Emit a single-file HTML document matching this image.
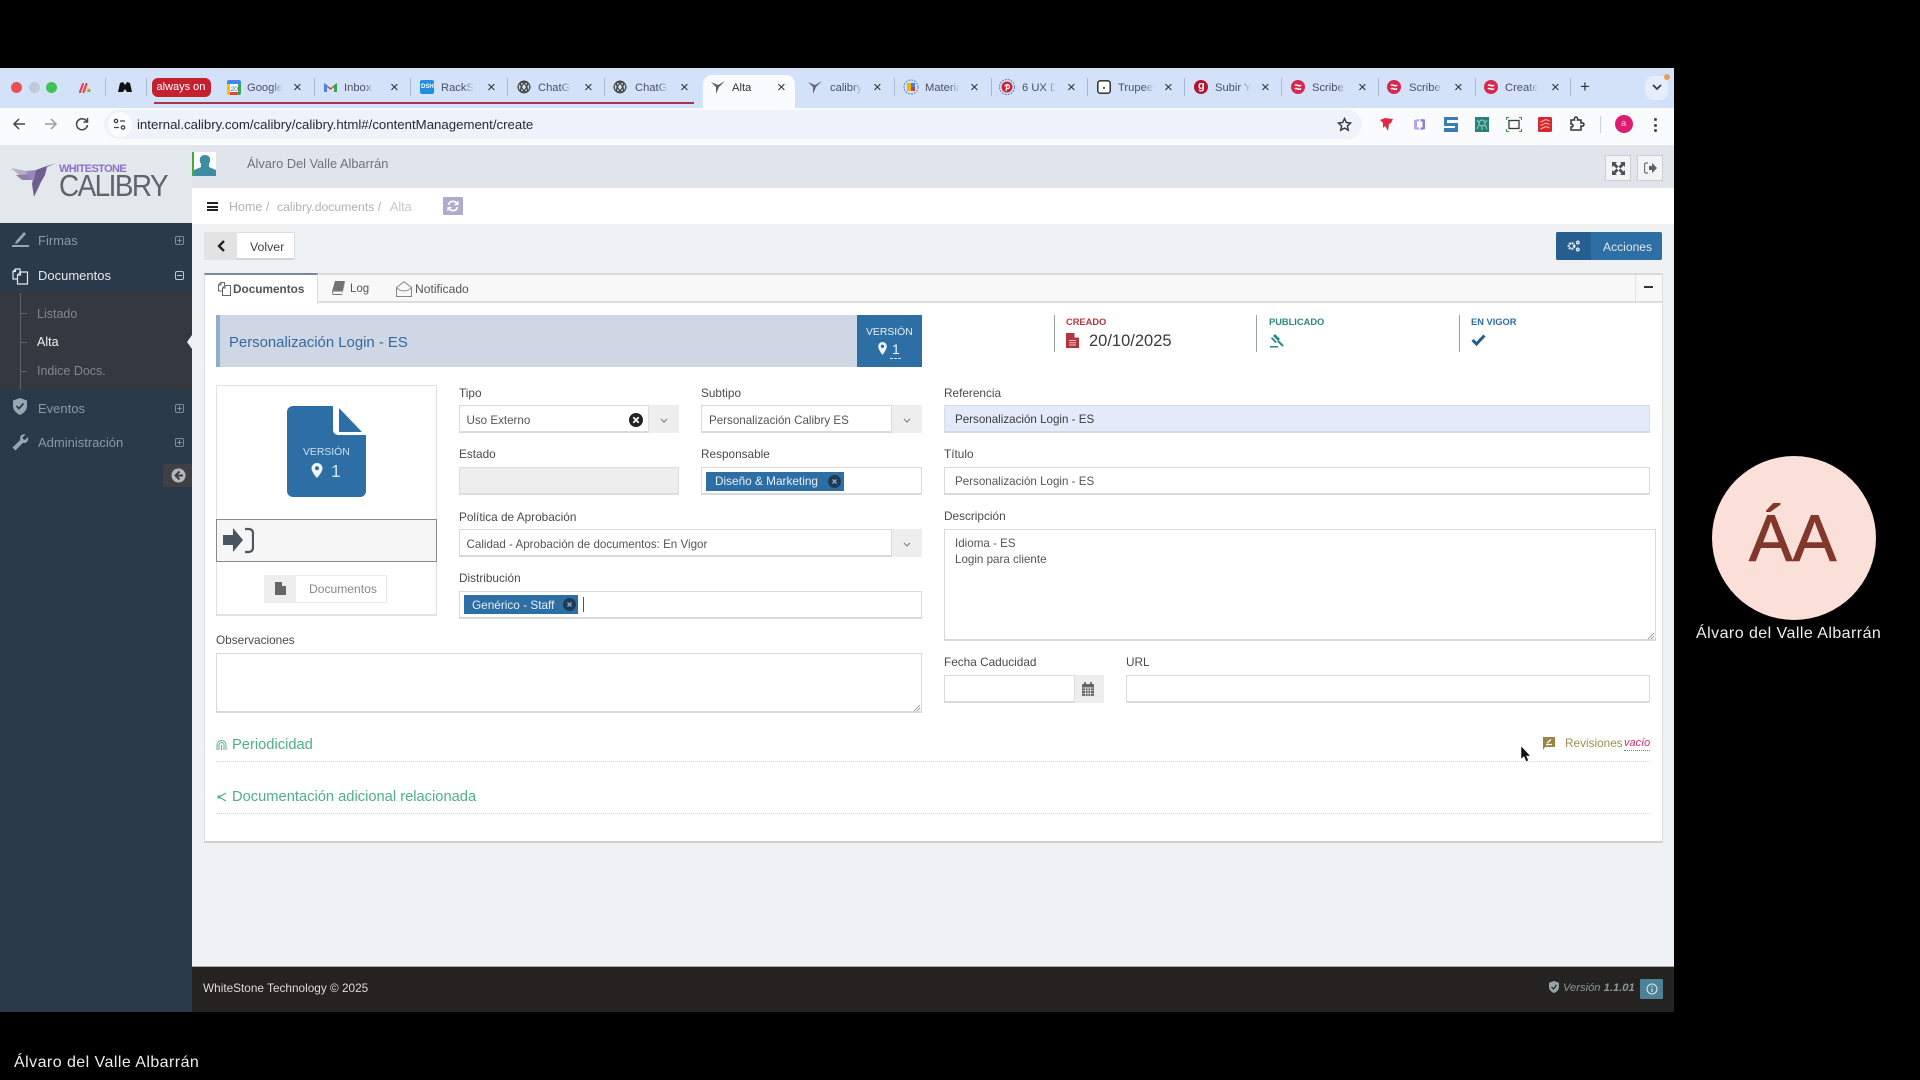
<!DOCTYPE html>
<html lang="es"><head><meta charset="utf-8"><title>Alta</title>
<style>
html,body{margin:0;padding:0;background:#000}
body{width:1920px;height:1080px;overflow:hidden;position:relative;font-family:"Liberation Sans",sans-serif;color:#444;filter:blur(.3px)}
div,svg,span.a{position:absolute;box-sizing:border-box}
.t{position:absolute;white-space:nowrap;line-height:20px;margin-top:-9px}
.tab{font-size:11.2px;color:#4a5060;overflow:hidden;-webkit-mask-image:linear-gradient(90deg,#000 70%,transparent 100%);mask-image:linear-gradient(90deg,#000 70%,transparent 100%)}
.x{font-size:15px;color:#333}
.sep{width:1px;height:18px;top:78px;background:#a9b8d2}
.lb{font-size:11.8px;color:#4a4a4a}
.in{background:#fff;border:1px solid #d9d9d9;border-bottom:2px solid #d9d9d9}
.v{font-size:11.6px;color:#555}
.arr{background:#eeeeee;border-left:1px solid #ddd}
.side{font-size:13px;color:#8b98a6}
.sub{font-size:12.5px;color:#83868b}
.tag{background:#2d6ea4;color:#e8f0f8;font-size:11.8px}
</style></head><body>

<!-- Browser chrome -->
<div style="left:0;top:68px;width:1674px;height:40px;background:#d3e2f8"></div>
<div style="left:0;top:108px;width:1674px;height:37px;background:#fafbfd"></div>
<div style="left:104px;top:110px;width:1258px;height:29px;background:#eef2fa;border-radius:15px"></div>

<div style="left:10.5px;top:81.5px;width:11px;height:11px;border-radius:50%;background:#ec4f52"></div>
<div style="left:28.5px;top:81.5px;width:11px;height:11px;border-radius:50%;background:#c0cadb"></div>
<div style="left:45.5px;top:81.5px;width:11px;height:11px;border-radius:50%;background:#3fc454"></div>

<svg style="left:79px;top:81px" width="12" height="12"><path d="M1 11 4 3M4.500 11 7.500 3" stroke="#e8434f" stroke-width="2.200" stroke-linecap="round"/><circle cx="10" cy="9.500" r="1.500" fill="#3fae5a"/><path d="M8 11 9.500 7" stroke="#f6b73c" stroke-width="1.800"/></svg>
<div class="sep" style="left:105px"></div>
<svg style="left:117px;top:81px" width="16" height="12"><path d="M1 11 3 2 6 1 8 4 10 1 13 2 15 11 10 11 8 8 6 11Z" fill="#111"/></svg>
<div class="sep" style="left:146px"></div>
<div style="left:152px;top:78px;width:59px;height:19px;background:#c4202f;border-radius:6px"></div>
<span class="t" style="left:156.500px;top:86px;font-size:11px;color:#fff">always on</span>

<!-- red group line -->
<div style="left:154px;top:102px;width:540px;height:2px;background:#a8354c"></div>

<svg style="left:227px;top:80px" width="14" height="15"><rect width="14" height="15" rx="2" fill="#fff"/><path d="M0 2a2 2 0 0 1 2-2h10a2 2 0 0 1 2 2v2H0Z" fill="#4285f4"/><path d="M0 4h3v11H2a2 2 0 0 1-2-2Z" fill="#fbbc04"/><path d="M11 4h3v9a2 2 0 0 1-2 2h-1Z" fill="#34a853"/><rect x="3" y="12" width="8" height="3" fill="#ea4335"/><text x="3.6" y="11" font-size="6.5" fill="#1967d2">20</text></svg>
<div class="t tab" style="left:247px;top:87px;width:36px">Google</div><span class="t x" style="left:293px;top:87px">×</span>
<div class="sep" style="left:314px"></div>
<svg style="left:324px;top:82px" width="13" height="10"><path d="M0 10V1l6.5 5L13 1v9h-3V5L6.5 8 3 5v5Z" fill="#ea4335"/><path d="M0 10V1l3 2v7Z" fill="#4285f4"/><path d="M13 10V1l-3 2v7Z" fill="#34a853"/></svg>
<div class="t tab" style="left:344px;top:87px;width:30px">Inbox (</div><span class="t x" style="left:390px;top:87px">×</span>
<div class="sep" style="left:410px"></div>
<div style="left:420px;top:80px;width:14px;height:14px;background:#1f8fe0;border-radius:2px"></div>
<span class="t" style="left:421px;top:86px;font-size:6px;color:#fff;font-weight:bold">DSH</span>
<div class="t tab" style="left:441px;top:87px;width:33px">RackSt</div><span class="t x" style="left:487px;top:87px">×</span>
<div class="sep" style="left:507px"></div>
<svg style="left:517px;top:80px" width="14" height="14" fill="none" stroke="#444" stroke-width="1.3"><circle cx="7" cy="7" r="5.8"/><ellipse cx="7" cy="7" rx="5.5" ry="2.4" transform="rotate(60 7 7)"/><ellipse cx="7" cy="7" rx="5.5" ry="2.4" transform="rotate(-60 7 7)"/></svg>
<div class="t tab" style="left:538px;top:87px;width:33px">ChatGPT</div><span class="t x" style="left:584px;top:87px">×</span>
<div class="sep" style="left:604px"></div>
<svg style="left:613px;top:80px" width="14" height="14" fill="none" stroke="#444" stroke-width="1.3"><circle cx="7" cy="7" r="5.8"/><ellipse cx="7" cy="7" rx="5.5" ry="2.4" transform="rotate(60 7 7)"/><ellipse cx="7" cy="7" rx="5.5" ry="2.4" transform="rotate(-60 7 7)"/></svg>
<div class="t tab" style="left:635px;top:87px;width:33px">ChatGPT</div><span class="t x" style="left:680px;top:87px">×</span>

<!-- active tab -->
<div style="left:703px;top:75px;width:92px;height:34px;background:#fafbfd;border-radius:9px 9px 0 0"></div>
<svg style="left:711px;top:81px" width="15" height="13"><path d="M0 1 7 4 14 0 8 6 5 13 5 6Z" fill="#5b5f6a"/></svg>
<span class="t" style="left:732px;top:87px;font-size:11.200px;color:#333">Alta</span><span class="t x" style="left:777px;top:87px">×</span>

<svg style="left:808px;top:81px" width="15" height="13"><path d="M0 1 7 4 14 0 8 6 5 13 5 6Z" fill="#6b6480"/></svg>
<div class="t tab" style="left:830px;top:87px;width:32px">calibry</div><span class="t x" style="left:873px;top:87px">×</span>
<div class="sep" style="left:894px"></div>
<svg style="left:903px;top:79px" width="16" height="16"><circle cx="8" cy="8" r="7" fill="none" stroke="#5f83c9" stroke-dasharray="2 1"/><rect x="4" y="4" width="4" height="8" fill="#f4b400"/><rect x="8" y="4" width="4" height="4" fill="#3b82f6"/><rect x="8" y="8" width="4" height="4" fill="#c2453b"/></svg>
<div class="t tab" style="left:925px;top:87px;width:35px">Materia</div><span class="t x" style="left:970px;top:87px">×</span>
<div class="sep" style="left:991px"></div>
<svg style="left:999px;top:79px" width="16" height="16"><circle cx="8" cy="8" r="7.5" fill="none" stroke="#5f83c9" stroke-dasharray="2 1"/><circle cx="8" cy="8" r="5.5" fill="#d0213a"/><path d="M7 12 8 6M6 7.500C6 5 10.500 5 10.500 7.500 10.500 10 8 10 7.500 9" stroke="#fff" stroke-width="1.200" fill="none"/></svg>
<div class="t tab" style="left:1022px;top:87px;width:34px">6 UX D</div><span class="t x" style="left:1067px;top:87px">×</span>
<div class="sep" style="left:1087px"></div>
<svg style="left:1097px;top:80px" width="14" height="14"><rect x=".8" y=".8" width="12.400" height="12.400" rx="2.500" fill="#fff" stroke="#222" stroke-width="1.400"/><circle cx="7" cy="8" r="1" fill="#222"/></svg>
<div class="t tab" style="left:1118px;top:87px;width:36px">Trupeer</div><span class="t x" style="left:1164px;top:87px">×</span>
<div class="sep" style="left:1184px"></div>
<div style="left:1194px;top:80px;width:14px;height:14px;border-radius:50%;background:#b5122f"></div>
<span class="t" style="left:1198px;top:85px;font-size:11px;color:#fff;font-weight:bold">g</span>
<div class="t tab" style="left:1215px;top:87px;width:36px">Subir Y</div><span class="t x" style="left:1261px;top:87px">×</span>
<div class="sep" style="left:1281px"></div>
<svg style="left:1291px;top:80px" width="14" height="14"><circle cx="7" cy="7" r="7" fill="#d6294f"/><path d="M4 5.500C6 3.500 8 7.500 10 5M4 9C6 7 8 11 10 8.500" stroke="#fff" stroke-width="1.500" fill="none"/></svg>
<div class="t tab" style="left:1312px;top:87px;width:34px">Scribe</div><span class="t x" style="left:1358px;top:87px">×</span>
<div class="sep" style="left:1378px"></div>
<svg style="left:1387px;top:80px" width="14" height="14"><circle cx="7" cy="7" r="7" fill="#d6294f"/><path d="M4 5.500C6 3.500 8 7.500 10 5M4 9C6 7 8 11 10 8.500" stroke="#fff" stroke-width="1.500" fill="none"/></svg>
<div class="t tab" style="left:1409px;top:87px;width:34px">Scribe</div><span class="t x" style="left:1454px;top:87px">×</span>
<div class="sep" style="left:1475px"></div>
<svg style="left:1484px;top:80px" width="14" height="14"><circle cx="7" cy="7" r="7" fill="#d6294f"/><path d="M4 5.500C6 3.500 8 7.500 10 5M4 9C6 7 8 11 10 8.500" stroke="#fff" stroke-width="1.500" fill="none"/></svg>
<div class="t tab" style="left:1505px;top:87px;width:33px">Create</div><span class="t x" style="left:1551px;top:87px">×</span>
<div class="sep" style="left:1570px"></div>
<span class="t" style="left:1580px;top:86px;font-size:17px;color:#333">+</span>
<div style="left:1645px;top:76px;width:23px;height:24px;background:#e6eefb;border-radius:8px"></div>
<svg style="left:1652px;top:84px" width="10" height="7"><path d="M1 1 5 5 9 1" stroke="#333" stroke-width="1.600" fill="none"/></svg>
<div style="left:1664px;top:74px;width:6px;height:6px;border-radius:50%;background:#ed9b54"></div>

<!-- toolbar icons -->
<svg style="left:12px;top:117px" width="15" height="14" fill="none" stroke="#444" stroke-width="1.500"><path d="M13 7H2M7 2 2 7l5 5"/></svg>
<svg style="left:43px;top:117px" width="15" height="14" fill="none" stroke="#9a9ea6" stroke-width="1.500"><path d="M2 7H13M8 2l5 5-5 5"/></svg>
<svg style="left:75px;top:117px" width="14" height="14" fill="none" stroke="#444" stroke-width="1.500"><path d="M11.800 4.500A5.500 5.500 0 1 0 12.500 8"/><path d="M12.500 1v4h-4" /></svg>
<div style="left:108px;top:112px;width:24px;height:25px;border-radius:50%;background:#fbfcfe"></div>
<svg style="left:113px;top:118px" width="13" height="13" fill="none" stroke="#444" stroke-width="1.300"><circle cx="3" cy="3" r="1.700"/><path d="M7 3h5M1 9.500h5"/><circle cx="10" cy="9.500" r="1.700"/></svg>
<span class="t" style="left:137px;top:124px;font-size:13.230px;color:#262a30">internal.calibry.com/calibry/calibry.html#/contentManagement/create</span>
<svg style="left:1337px;top:117px" width="15" height="15" fill="none" stroke="#333" stroke-width="1.400"><path d="M7.500 1.500 9.300 5.500 13.700 6 10.400 8.900 11.300 13.200 7.500 11 3.700 13.200 4.600 8.900 1.300 6 5.700 5.500Z"/></svg>
<svg style="left:1379px;top:117px" width="15" height="15"><path d="M1 3 6 1 14 2 12 6 10 7 9 14 6 9 4 11 4 6Z" fill="#df2b45"/></svg>
<svg style="left:1413px;top:118px" width="13" height="13"><path d="M1 2 6 1V3.500H4V9.500H6V12L1 11Z" fill="#b6a4ee"/><path d="M12 1.500 7.500 1V3.500H9.500V9.500H7.500V12L12 11Z" fill="#8d7be0"/></svg>
<svg style="left:1444px;top:117px" width="15" height="15"><rect width="15" height="15" fill="#fff"/><path d="M0 0H14V3H3V6H14V15H0V11H11V9H0Z" fill="#3a7db3"/></svg>
<div style="left:1475px;top:117px;width:14px;height:15px;background:#2a7f78"></div>
<svg style="left:1476px;top:118px" width="12" height="13" fill="none" stroke="#9ed7cc" stroke-width=".9"><circle cx="6" cy="5" r="3"/><path d="M3 5 1 2M9 5l2-3M6 8v4M3 7 1 11M9 7l2 4"/></svg>
<svg style="left:1506px;top:117px" width="16" height="15" fill="none"><rect x="3" y="3.500" width="10" height="8" stroke="#3c3c3c" stroke-width="1.300"/><path d="M0.500 3V.5H3M13 .5H15.500V3M.5 12V14.500H3M13 14.500H15.500V12" stroke="#3f8f4c" stroke-width="1.100"/></svg>
<svg style="left:1538px;top:117px" width="15" height="15"><rect width="14" height="15" rx="1.500" fill="#d6282e"/><path d="M2.500 5 8 2.500 11.500 4M2.500 8.500 8 6 11.500 7.500M2.500 12 8 9.500 11.500 11" stroke="#f5b9b9" stroke-width="1" fill="none"/></svg>
<svg style="left:1569px;top:116px" width="16" height="16" fill="none" stroke="#333" stroke-width="1.500"><path d="M2 4H5.500C5 2 6 1 7 1S9 2 8.500 4H12V7C14 6.500 15 7.500 15 8.500S14 10.500 12 10V14H2V11C3.500 11 4 10.500 4 9.500S3.500 8 2 8Z"/></svg>
<div style="left:1600px;top:116px;width:1px;height:17px;background:#c7d2e5"></div>
<div style="left:1615px;top:115px;width:18px;height:18px;border-radius:50%;background:#dd1c73"></div>
<span class="t" style="left:1621px;top:123px;font-size:9.500px;color:#f5c5da">a</span>
<div style="left:1653.500px;top:118px;width:3px;height:3px;border-radius:50%;background:#444"></div>
<div style="left:1653.500px;top:123.500px;width:3px;height:3px;border-radius:50%;background:#444"></div>
<div style="left:1653.500px;top:129px;width:3px;height:3px;border-radius:50%;background:#444"></div>

<!-- App frame -->
<div style="left:0;top:145px;width:192px;height:78px;background:#e3e8ed"></div>
<div style="left:0;top:223px;width:192px;height:789px;background:#2a3a4b"></div>
<div style="left:192px;top:145px;width:1482px;height:43px;background:#e0e5eb"></div>
<div style="left:192px;top:188px;width:1482px;height:36px;background:#ffffff"></div>
<div style="left:192px;top:224px;width:1482px;height:742px;background:#f0f1f3"></div>
<div style="left:192px;top:966px;width:1482px;height:46px;background:#242321;border-top:1px solid #aaa"></div>

<!-- Logo -->
<svg style="left:10px;top:161px" width="48" height="40"><path d="M1 7 16 10 23 16 9 14Z" fill="#b8aecb"/><path d="M6 14 22 13 24 19 12 19Z" fill="#8f83aa"/><path d="M26 9 34 6 46 2 37 6 35 14 31 21 24 36 22 23 24 14Z" fill="#6f5f8f"/><path d="M16 10 26 9 24 19 20 19Z" fill="#9a87bb"/></svg>
<span class="t" style="left:59px;top:168px;font-size:11px;font-weight:bold;color:#8b70c6;letter-spacing:-.6px">WHITESTONE</span>
<span class="t" style="left:59px;top:185px;font-size:30.500px;color:#5e636c;letter-spacing:-1.700px;line-height:20px;transform:scaleX(.915);transform-origin:0 50%">CALIBRY</span>

<!-- Top bar -->
<div style="left:192px;top:152px;width:24px;height:24px;background:#fff;border-left:2px solid #47a83b"></div>
<svg style="left:194px;top:152px" width="22" height="24"><path d="M0 24V18L7 15V12C5 9 5 3 11 3S17 9 15 12V15L22 18V24Z" fill="#3f8ea0"/></svg>
<span class="t" style="left:247px;top:163px;font-size:12.800px;color:#6d7278">Álvaro Del Valle Albarrán</span>
<div style="left:1605px;top:155px;width:26px;height:26px;background:#f3f4f5;border:1px solid #cbcfd4"></div>
<svg style="left:1612px;top:162px" width="13" height="13"><path d="M0 0H5L3.500 1.500 6.500 4.500 4.500 6.500 1.500 3.500 0 5ZM13 0V5L11.500 3.500 8.500 6.500 6.500 4.500 9.500 1.500 8 0ZM0 13V8L1.500 9.500 4.500 6.500 6.500 8.500 3.500 11.500 5 13ZM13 13H8L9.500 11.500 6.500 8.500 8.500 6.500 11.500 9.500 13 8Z" fill="#4a5058"/></svg>
<div style="left:1637px;top:155px;width:26px;height:26px;background:#f3f4f5;border:1px solid #cbcfd4"></div>
<svg style="left:1644px;top:162px" width="13" height="12"><path d="M4 1H2A1.500 1.500 0 0 0 .5 2.500V9.500A1.500 1.500 0 0 0 2 11H4" fill="none" stroke="#6a7078" stroke-width="1.200"/><path d="M5 4H8V1L13 6 8 11V8H5Z" fill="#5a6068"/></svg>

<!-- Breadcrumb -->
<div style="left:207px;top:202px;width:11px;height:2px;background:#222"></div>
<div style="left:207px;top:205.500px;width:11px;height:2px;background:#222"></div>
<div style="left:207px;top:209px;width:11px;height:2px;background:#222"></div>
<span class="t" style="left:229px;top:206px;font-size:12.500px;color:#b0b3b7">Home /</span>
<span class="t" style="left:277px;top:206px;font-size:12.200px;color:#b0b3b7">calibry.documents /</span>
<span class="t" style="left:390px;top:206px;font-size:12.500px;color:#c5c7ca">Alta</span>
<div style="left:443px;top:197px;width:20px;height:18px;background:#b0aacf;border-radius:1px"></div>
<svg style="left:447px;top:200px" width="12" height="12" fill="none" stroke="#fff" stroke-width="1.700"><path d="M1.500 5A4.500 4.500 0 0 1 10 4M10.500 7A4.500 4.500 0 0 1 2 8"/><path d="M7.500 4.500H11V1M4.500 7.500H1V11" stroke-width="1.200"/></svg>

<!-- Sidebar menu -->
<svg style="left:12px;top:231px" width="17" height="17"><path d="M4 10 12 1 14 3 6 12 3 13Z" fill="#98a6b3"/><rect y="14" width="17" height="2" fill="#98a6b3"/></svg>
<span class="t side" style="left:38px;top:240px">Firmas</span>
<svg style="left:175px;top:236px" width="9" height="9" fill="none" stroke="#7e8b98"><rect x=".5" y=".5" width="8" height="8" rx="1.500"/><path d="M2 4.500H7M4.500 2V7"/></svg>
<svg style="left:12px;top:268px" width="17" height="17" fill="none" stroke="#e4e8ec" stroke-width="1.200"><path d="M1 3.500 3.500 1H8V4M3.500 1V3.500H1V11H5"/><path d="M5.500 7 8.500 4H15.500V16H5.500Z"/><path d="M8.500 4V7H5.500"/></svg>
<span class="t side" style="left:38px;top:275px;color:#e4e8ec">Documentos</span>
<svg style="left:175px;top:271px" width="9" height="9" fill="none" stroke="#c0c8d0"><rect x=".5" y=".5" width="8" height="8" rx="1.500"/><path d="M2 4.500H7"/></svg>
<div style="left:0;top:292px;width:192px;height:98px;background:#33393f"></div>
<div style="left:20px;top:293px;width:1px;height:97px;background:#5e6368"></div>
<div style="left:20px;top:313px;width:7px;height:1px;background:#5e6368"></div>
<div style="left:20px;top:342px;width:7px;height:1px;background:#5e6368"></div>
<div style="left:20px;top:371px;width:7px;height:1px;background:#5e6368"></div>
<span class="t sub" style="left:37px;top:312.500px">Listado</span>
<span class="t sub" style="left:37px;top:341px;color:#f0f0f0">Alta</span>
<span class="t sub" style="left:37px;top:370px">Indice Docs.</span>
<svg style="left:187px;top:335px" width="5" height="14"><path d="M5 0 0 7 5 14Z" fill="#f0f1f3"/></svg>
<svg style="left:13px;top:398px" width="14" height="17"><path d="M7 0 14 2.500V8C14 12 11 15 7 17 3 15 0 12 0 8V2.500Z" fill="#98a6b3"/><path d="M3.500 8 6 10.500 10.500 5.500" stroke="#2a3a4b" stroke-width="1.700" fill="none"/></svg>
<span class="t side" style="left:38px;top:408px">Eventos</span>
<svg style="left:175px;top:404px" width="9" height="9" fill="none" stroke="#7e8b98"><rect x=".5" y=".5" width="8" height="8" rx="1.500"/><path d="M2 4.500H7M4.500 2V7"/></svg>
<svg style="left:12px;top:434px" width="17" height="17"><path d="M16 3 13 6 11 5 10.500 3.500 13.500 .5C10.500 -.5 8 1.500 8 4.500L8.300 6 .5 13.500 3.500 16.500 11 8.700C14 10 17 7 16 3Z" fill="#98a6b3"/></svg>
<span class="t side" style="left:38px;top:442px">Administración</span>
<svg style="left:175px;top:438px" width="9" height="9" fill="none" stroke="#7e8b98"><rect x=".5" y=".5" width="8" height="8" rx="1.500"/><path d="M2 4.500H7M4.500 2V7"/></svg>
<div style="left:163px;top:464px;width:29px;height:23px;background:#3e4144;border-radius:3px 0 0 3px"></div>
<svg style="left:171px;top:468px" width="15" height="15"><circle cx="7.500" cy="7.500" r="7" fill="#b5b9bd"/><path d="M8.500 3.500 4.500 7.500 8.500 11.500M5 7.500H12" stroke="#3e4144" stroke-width="2" fill="none"/></svg>

<!-- Volver / Acciones -->
<div style="left:204px;top:232px;width:91px;height:28px;background:#fff;border:1px solid #dcdcdc;border-bottom:2px solid #d5d5d5"></div>
<div style="left:204px;top:232px;width:33px;height:28px;background:#e3e3e3"></div>
<svg style="left:217px;top:240px" width="8" height="12"><path d="M7 1 2 6 7 11" stroke="#222" stroke-width="2.400" fill="none"/></svg>
<span class="t" style="left:250px;top:245.500px;font-size:12.300px;color:#444">Volver</span>
<div style="left:1556px;top:232px;width:106px;height:28px;background:#2d6ea4;border-radius:2px"></div>
<div style="left:1556px;top:232px;width:35px;height:28px;background:#265f8f;border-radius:2px 0 0 2px"></div>
<svg style="left:1567px;top:240px" width="13" height="12" fill="none" stroke="#e8f0f6"><circle cx="4.500" cy="6" r="2.800" stroke-width="2.200" stroke-dasharray="1.800 .8"/><circle cx="10.800" cy="2.500" r="1.300" stroke-width="1.300"/><circle cx="10.800" cy="9.500" r="1.300" stroke-width="1.300"/></svg>
<span class="t" style="left:1603px;top:245.500px;font-size:12.100px;color:#dfe8f0">Acciones</span>

<!-- Panel -->
<div style="left:204px;top:273px;width:1459px;height:570px;background:#fff;border:1px solid #dcdcdc;border-top:2px solid #d9d9d9;border-bottom:2px solid #cfcfcf"></div>
<div style="left:205px;top:275px;width:1457px;height:28px;background:#f8f8f8;border-bottom:2px solid #dddddd"></div>
<div style="left:204px;top:273px;width:114px;height:31px;background:#fff;border-top:2px solid #7d8a96;border-right:1px solid #dcdcdc;border-left:1px solid #dcdcdc"></div>
<svg style="left:218px;top:282px" width="13" height="14" fill="none" stroke="#666" stroke-width="1"><path d="M.5 3 3 .5H6.500V3M3 .5V3H.5V9H4"/><path d="M4.500 6 7 3.500H12.500V13.500H4.500Z"/><path d="M7 3.500V6H4.500"/></svg>
<span class="t" style="left:233px;top:288px;font-size:11.800px;font-weight:bold;color:#555">Documentos</span>
<svg style="left:332px;top:281px" width="13" height="14"><path d="M3 0H13L10.500 10.500H1.500C.5 10.500 .5 13 1.500 13H10L12.800 2V3L10 14H1.500C0 14 -.3 12 0 10.500Z" fill="#6f7377"/></svg>
<span class="t" style="left:350px;top:288px;font-size:11.500px;color:#555">Log</span>
<svg style="left:396px;top:281px" width="16" height="16" fill="none" stroke="#888" stroke-width="1"><path d="M.5 6.500 8 .7 15.500 6.500V15.500H.5Z"/><path d="M.5 6.500C4 11 12 11 15.500 6.500"/></svg>
<span class="t" style="left:415px;top:288px;font-size:12.100px;color:#555">Notificado</span>
<div style="left:1635px;top:275px;width:1px;height:28px;background:#e3e3e3"></div>
<div style="left:1644px;top:286px;width:9px;height:2px;background:#333"></div>

<!-- Title bar -->
<div style="left:216px;top:315px;width:706px;height:52px;background:#d0d7e4;border-left:4px solid #8fafcd"></div>
<span class="t" style="left:229px;top:342px;font-size:14.900px;color:#336a9e">Personalización Login - ES</span>
<div style="left:857px;top:315px;width:65px;height:52px;background:#2d6ea4"></div>
<span class="t" style="left:866px;top:332px;font-size:10.400px;color:#e6eef5">VERSIÓN</span>
<svg style="left:878px;top:342px" width="9" height="13"><path d="M4.500 0A4.300 4.300 0 0 0 .2 4.300C.2 7.500 4.500 13 4.500 13S8.800 7.500 8.800 4.300A4.300 4.300 0 0 0 4.500 0Z" fill="#f2f6fa"/><circle cx="4.500" cy="4.300" r="1.700" fill="#2d6ea4"/></svg>
<span class="t" style="left:892px;top:348px;font-size:14px;color:#f2f6fa">1</span>
<div style="left:890px;top:358px;width:11px;border-top:1px dashed #cfe0ee"></div>

<!-- Dates -->
<div style="left:1054px;top:315px;width:1px;height:37px;background:#9a9fa5"></div>
<span class="t" style="left:1066px;top:321px;font-size:9.300px;font-weight:bold;color:#b33842">CREADO</span>
<svg style="left:1066px;top:333px" width="13" height="15"><path d="M0 0H8L13 5V15H0Z" fill="#b1343f"/><path d="M8.500 0V4.500H13" fill="#fff"/><path d="M3 7.500H10M3 9.800H10M3 12H10" stroke="#f0c8cb" stroke-width="1"/></svg>
<span class="t" style="left:1089px;top:340px;font-size:16.500px;color:#3c3c3c">20/10/2025</span>
<div style="left:1256px;top:315px;width:1px;height:37px;background:#9a9fa5"></div>
<span class="t" style="left:1269px;top:321px;font-size:9.300px;font-weight:bold;color:#2a8a83">PUBLICADO</span>
<svg style="left:1269px;top:333px" width="15" height="15"><path d="M6 1 11 6 9 8 4 3ZM3 4 8 9 6.500 10 2 5.500Z" fill="#2a8a83"/><path d="M9 8 14 13" stroke="#2a8a83" stroke-width="2"/><rect x="1" y="13" width="8" height="1.500" fill="#2a8a83"/></svg>
<div style="left:1459px;top:315px;width:1px;height:37px;background:#9a9fa5"></div>
<span class="t" style="left:1471px;top:321px;font-size:9.300px;font-weight:bold;color:#2c6fa5">EN VIGOR</span>
<svg style="left:1471px;top:334px" width="15" height="12"><path d="M1.500 6 5.500 10 13.500 1.500" stroke="#235c8d" stroke-width="3" fill="none"/></svg>

<!-- Left doc box -->
<div style="left:216px;top:385px;width:221px;height:231px;background:#fff;border:1px solid #e0e0e0;border-bottom:2px solid #e3e3e3"></div>
<svg style="left:287px;top:406px" width="79" height="91"><path d="M6 0H46V24A5 5 0 0 0 51 29H79V85A6 6 0 0 1 73 91H6A6 6 0 0 1 0 85V6A6 6 0 0 1 6 0Z" fill="#2d6ea4"/><path d="M52 2 75 26H52Z" fill="#2d6ea4"/></svg>
<span class="t" style="left:303px;top:452px;font-size:10.400px;color:#cfe0ee">VERSIÓN</span>
<svg style="left:311px;top:463px" width="12" height="15"><path d="M6 0A5.500 5.500 0 0 0 .5 5.500C.5 9 6 15 6 15S11.500 9 11.500 5.500A5.500 5.500 0 0 0 6 0Z" fill="#f2f6fa"/><circle cx="6" cy="5.300" r="2" fill="#2d6ea4"/></svg>
<span class="t" style="left:331px;top:469.500px;font-size:17.500px;color:#d5e3ef">1</span>
<div style="left:216px;top:519px;width:221px;height:43px;background:#f6f6f6;border:1px solid #8a8a8a"></div>
<svg style="left:223px;top:527px" width="31" height="27"><path d="M0 8H10V1L20 13 10 25V18H0Z" fill="#49565f"/><path d="M22 2H26A4 4 0 0 1 30 6V21A4 4 0 0 1 26 25H22" fill="none" stroke="#49565f" stroke-width="2.200"/></svg>
<div style="left:264px;top:575px;width:123px;height:28px;background:#fff;border:1px solid #eaeaea"></div>
<div style="left:264px;top:575px;width:32px;height:28px;background:#eeeeee"></div>
<svg style="left:275px;top:582px" width="11" height="13"><path d="M0 0H6.500L11 4.500V13H0Z" fill="#666"/><path d="M7 0V4H11" fill="#eee"/></svg>
<span class="t" style="left:309px;top:588px;font-size:12.100px;color:#888">Documentos</span>

<!-- Form col 1 -->
<span class="t lb" style="left:459px;top:392px">Tipo</span>
<div class="in" style="left:459px;top:405px;width:220px;height:28px"></div>
<span class="t v" style="left:466.500px;top:420px">Uso Externo</span>
<svg style="left:629px;top:413px" width="14" height="14"><circle cx="7" cy="7" r="7" fill="#222"/><path d="M4.300 4.300 9.700 9.700M9.700 4.300 4.300 9.700" stroke="#fff" stroke-width="1.800"/></svg>
<div class="arr" style="left:648px;top:405px;width:31px;height:28px"></div>
<svg style="left:660px;top:418px" width="8" height="6"><path d="M1 1 4 4 7 1" stroke="#777" stroke-width="1" fill="none"/></svg>

<span class="t lb" style="left:701px;top:392px">Subtipo</span>
<div class="in" style="left:701px;top:405px;width:221px;height:28px"></div>
<span class="t v" style="left:709px;top:420px">Personalización Calibry ES</span>
<div class="arr" style="left:891px;top:405px;width:31px;height:28px"></div>
<svg style="left:903px;top:418px" width="8" height="6"><path d="M1 1 4 4 7 1" stroke="#777" stroke-width="1" fill="none"/></svg>

<span class="t lb" style="left:459px;top:453px">Estado</span>
<div style="left:459px;top:467px;width:220px;height:28px;background:#eeeeee;border:1px solid #dedede;border-bottom:2px solid #dedede"></div>

<span class="t lb" style="left:701px;top:453px">Responsable</span>
<div class="in" style="left:701px;top:467px;width:221px;height:28px"></div>
<div class="tag" style="left:706px;top:472px;width:138px;height:19px"></div>
<span class="t tag" style="left:715px;top:480px;background:none">Diseño &amp; Marketing</span>
<svg style="left:828px;top:475px" width="13" height="13"><circle cx="6.500" cy="6.500" r="6.500" fill="#1f3a55"/><path d="M4.500 4.500 8.500 8.500M8.500 4.500 4.500 8.500" stroke="#8fb0cc" stroke-width="1.300"/></svg>

<span class="t lb" style="left:459px;top:516px">Política de Aprobación</span>
<div class="in" style="left:459px;top:529px;width:463px;height:28px"></div>
<span class="t v" style="left:466.500px;top:544px">Calidad - Aprobación de documentos: En Vigor</span>
<div class="arr" style="left:891px;top:529px;width:31px;height:28px"></div>
<svg style="left:903px;top:542px" width="8" height="6"><path d="M1 1 4 4 7 1" stroke="#777" stroke-width="1" fill="none"/></svg>

<span class="t lb" style="left:459px;top:577px">Distribución</span>
<div class="in" style="left:459px;top:591px;width:463px;height:28px"></div>
<div class="tag" style="left:464px;top:595px;width:114px;height:19px"></div>
<span class="t tag" style="left:472px;top:604px;background:none">Genérico - Staff</span>
<svg style="left:563px;top:598px" width="13" height="13"><circle cx="6.500" cy="6.500" r="6.500" fill="#1f3a55"/><path d="M4.500 4.500 8.500 8.500M8.500 4.500 4.500 8.500" stroke="#8fb0cc" stroke-width="1.300"/></svg>
<div style="left:583px;top:597px;width:1px;height:15px;background:#555"></div>

<span class="t lb" style="left:216px;top:639px">Observaciones</span>
<div class="in" style="left:216px;top:653px;width:706px;height:60px"></div>
<svg style="left:913px;top:704px" width="8" height="8" stroke="#888" stroke-width=".8"><path d="M1 7 7 1M4 7 7 4"/></svg>

<!-- Form col 2 -->
<span class="t lb" style="left:944px;top:392px">Referencia</span>
<div style="left:944px;top:405px;width:706px;height:28px;background:#e3ebfa;border:1px solid #d9dde5;border-bottom:2px solid #d5d9e0"></div>
<span class="t v" style="left:955px;top:419px;color:#3a3a3a">Personalización Login - ES</span>
<span class="t lb" style="left:944px;top:453px">Título</span>
<div class="in" style="left:944px;top:467px;width:706px;height:28px"></div>
<span class="t v" style="left:955px;top:481px">Personalización Login - ES</span>
<span class="t lb" style="left:944px;top:515px">Descripción</span>
<div class="in" style="left:944px;top:529px;width:712px;height:112px"></div>
<span class="t v" style="left:955px;top:543px">Idioma - ES</span>
<span class="t v" style="left:955px;top:559px">Login para cliente</span>
<svg style="left:1647px;top:632px" width="8" height="8" stroke="#888" stroke-width=".8"><path d="M1 7 7 1M4 7 7 4"/></svg>

<span class="t lb" style="left:944px;top:661px">Fecha Caducidad</span>
<div class="in" style="left:944px;top:675px;width:160px;height:28px"></div>
<div class="arr" style="left:1074px;top:675px;width:30px;height:28px"></div>
<svg style="left:1082px;top:682px" width="12" height="14"><rect y="2" width="12" height="12" rx="1" fill="#666"/><path d="M3 0V3M9 0V3" stroke="#555" stroke-width="1.600"/><path d="M.5 6H11.500M.5 8.700H11.500M.5 11.300H11.500M3.500 5V14M6 5V14M8.500 5V14" stroke="#eee" stroke-width=".7"/></svg>
<span class="t lb" style="left:1126px;top:661px">URL</span>
<div class="in" style="left:1126px;top:675px;width:524px;height:28px"></div>

<!-- Sections -->
<svg style="left:216px;top:739px" width="11" height="12" fill="none" stroke="#55b08c" stroke-width="1"><path d="M1 11V6A4.500 4.500 0 0 1 10 6V11"/><path d="M3 11V6A2.500 2.500 0 0 1 8 6V11"/><path d="M5.500 11V6"/></svg>
<span class="t" style="left:232px;top:743.500px;font-size:14.700px;color:#4fae88">Periodicidad</span>
<div style="left:216px;top:761px;width:1434px;border-top:1px dotted #d6d6d6"></div>
<svg style="left:217px;top:791px" width="10" height="12" fill="none" stroke="#4fae88" stroke-width="1.200"><path d="M9 2 2 6 9 10"/><circle cx="2" cy="6" r="1" fill="#4fae88"/></svg>
<span class="t" style="left:232px;top:796px;font-size:14.700px;color:#4fae88">Documentación adicional relacionada</span>
<div style="left:216px;top:813px;width:1434px;border-top:1px dotted #d6d6d6"></div>

<svg style="left:1543px;top:737px" width="12" height="13"><path d="M0 0H12V10H2L0 13Z" fill="#9a8445"/><path d="M3 7.500H9M4 6 8 2.500" stroke="#fff" stroke-width="1.200"/></svg>
<span class="t" style="left:1565px;top:742px;font-size:11.800px;color:#a08c4e">Revisiones</span>
<span class="t" style="left:1624px;top:742px;font-size:11px;font-style:italic;color:#d42a6b">vacío</span>
<div style="left:1624px;top:750px;width:26px;border-top:1px dotted #4e92b8"></div>

<svg style="left:1520px;top:746px" width="11" height="17"><path d="M1 0V13L4 10.500 6 15.500 8.500 14.500 6.500 10H10.500Z" fill="#111" stroke="#fff" stroke-width=".5"/></svg>

<!-- Footer -->
<span class="t" style="left:203px;top:986.500px;font-size:11.800px;color:#dcdcdc">WhiteStone Technology © 2025</span>
<svg style="left:1549px;top:981px" width="10" height="12"><path d="M5 0 10 1.800V6C10 9 7.500 11 5 12 2.500 11 0 9 0 6V1.800Z" fill="#97a2a6"/><path d="M2.500 6 4.500 8 7.500 4" stroke="#242321" stroke-width="1.200" fill="none"/></svg>
<span class="t" style="left:1563px;top:987px;font-size:11.200px;font-style:italic;color:#8f9598">Versión <b>1.1.01</b></span>
<div style="left:1640px;top:979px;width:23px;height:20px;background:#4d8296;border-radius:1px"></div>
<svg style="left:1645.500px;top:983px" width="12" height="12" fill="none" stroke="#d9e6ea" stroke-width="1.100"><circle cx="6" cy="6" r="5"/><path d="M6 5.500V9M6 3V4.200"/></svg>

<!-- Meeting overlay -->
<div style="left:1712px;top:456px;width:164px;height:164px;border-radius:50%;background:#fbdfd9"></div>
<span class="t" style="left:1749px;top:538.500px;font-size:65.500px;color:#81382a;line-height:80px;margin-top:-40px;-webkit-text-stroke:.9px #81382a">ÁA</span>
<span class="t" style="left:1696px;top:633px;font-size:16px;color:#eeeeee;letter-spacing:.45px">Álvaro del Valle Albarrán</span>
<span class="t" style="left:14px;top:1062px;font-size:16px;color:#eeeeee;letter-spacing:.45px">Álvaro del Valle Albarrán</span>
</body></html>
